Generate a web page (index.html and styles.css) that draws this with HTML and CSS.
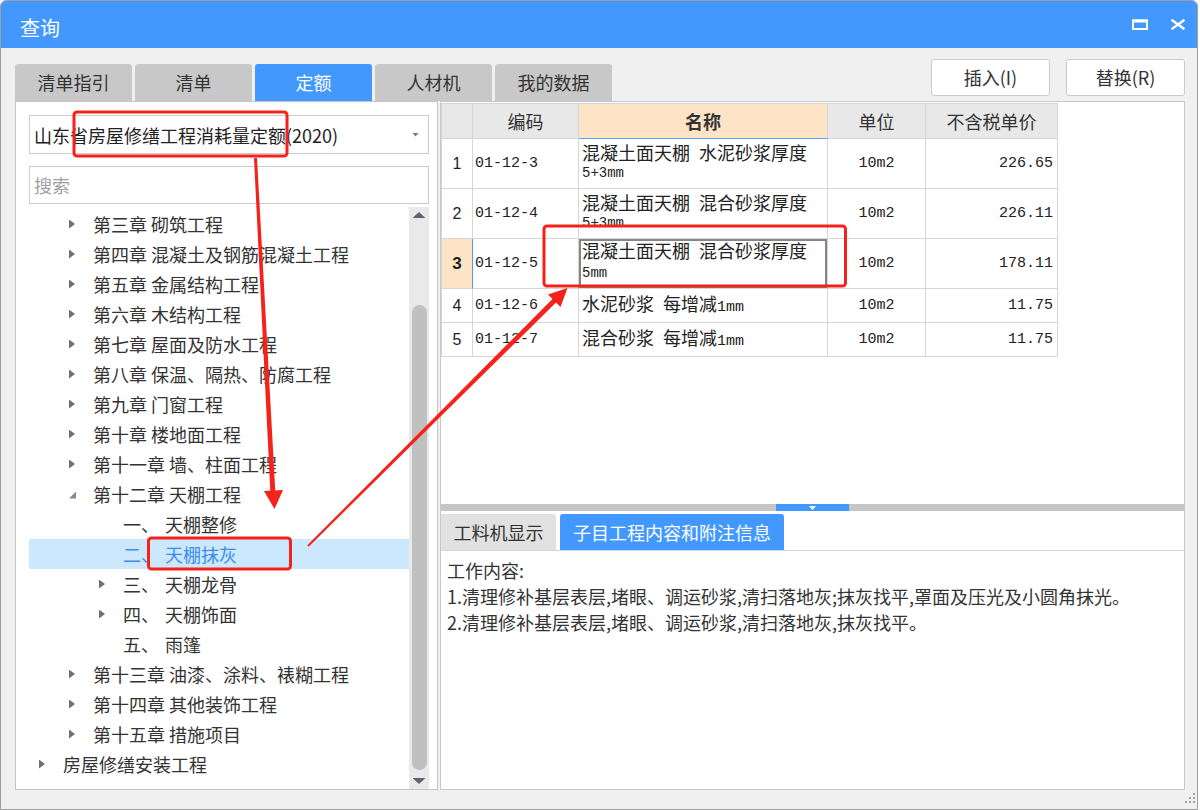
FILE: index.html
```html
<!DOCTYPE html>
<html lang="zh-CN">
<head>
<meta charset="utf-8">
<title>查询</title>
<link rel="stylesheet" href="styles.css">
</head>
<body>
<div class="window">
  <div class="titlebar">
    <span class="title">查询</span>
    <div class="win-ctrls">
      <svg class="ic" width="16" height="11" viewBox="0 0 16 11"><rect x="1" y="1.5" width="14" height="8.5" fill="none" stroke="#fff" stroke-width="2"/><rect x="0" y="0.5" width="16" height="3" fill="#fff"/></svg>
      <svg class="ic" width="16" height="11" viewBox="0 0 16 11"><path d="M1.5 0.8 L14.5 10.2 M14.5 0.8 L1.5 10.2" stroke="#fff" stroke-width="2.4" fill="none"/></svg>
    </div>
  </div>

  <div class="toolbar">
    <div class="tabs">
      <div class="tab">清单指引</div>
      <div class="tab">清单</div>
      <div class="tab active">定额</div>
      <div class="tab">人材机</div>
      <div class="tab">我的数据</div>
    </div>
    <div class="actions">
      <button class="btn">插入(I)</button>
      <button class="btn">替换(R)</button>
    </div>
  </div>

  <div class="main">
    <div class="left">
      <div class="select"><span class="select-text">山东省房屋修缮工程消耗量定额(2020)</span><i class="caret"></i></div>
      <div class="search">搜索</div>
      <div class="tree-wrap">
        <ul class="tree">
          <li class="row l1"><span class="tw"><b class="tri-r"></b></span>第三章 砌筑工程</li>
          <li class="row l1"><span class="tw"><b class="tri-r"></b></span>第四章 混凝土及钢筋混凝土工程</li>
          <li class="row l1"><span class="tw"><b class="tri-r"></b></span>第五章 金属结构工程</li>
          <li class="row l1"><span class="tw"><b class="tri-r"></b></span>第六章 木结构工程</li>
          <li class="row l1"><span class="tw"><b class="tri-r"></b></span>第七章 屋面及防水工程</li>
          <li class="row l1"><span class="tw"><b class="tri-r"></b></span>第八章 保温、隔热、防腐工程</li>
          <li class="row l1"><span class="tw"><b class="tri-r"></b></span>第九章 门窗工程</li>
          <li class="row l1"><span class="tw"><b class="tri-r"></b></span>第十章 楼地面工程</li>
          <li class="row l1"><span class="tw"><b class="tri-r"></b></span>第十一章 墙、柱面工程</li>
          <li class="row l1"><span class="tw"><b class="tri-e"></b></span>第十二章 天棚工程</li>
          <li class="row l2"><span class="tw"></span><span class="no">一、</span>天棚整修</li>
          <li class="row l2 sel"><span class="tw"></span><span class="no">二、</span>天棚抹灰</li>
          <li class="row l2"><span class="tw"><b class="tri-r"></b></span><span class="no">三、</span>天棚龙骨</li>
          <li class="row l2"><span class="tw"><b class="tri-r"></b></span><span class="no">四、</span>天棚饰面</li>
          <li class="row l2"><span class="tw"></span><span class="no">五、</span>雨篷</li>
          <li class="row l1"><span class="tw"><b class="tri-r"></b></span>第十三章 油漆、涂料、裱糊工程</li>
          <li class="row l1"><span class="tw"><b class="tri-r"></b></span>第十四章 其他装饰工程</li>
          <li class="row l1"><span class="tw"><b class="tri-r"></b></span>第十五章 措施项目</li>
          <li class="row l0"><span class="tw"><b class="tri-r"></b></span>房屋修缮安装工程</li>
        </ul>
        <div class="vscroll">
          <b class="arr-up"></b>
          <div class="thumb"></div>
          <b class="arr-down"></b>
        </div>
      </div>
    </div>

    <div class="right">
      <div class="grid-area">
        <div class="grid">
          <div class="h"></div>
          <div class="h">编码</div>
          <div class="h name-h">名称</div>
          <div class="h">单位</div>
          <div class="h">不含税单价</div>

          <div class="c num">1</div>
          <div class="c code">01-12-3</div>
          <div class="c name"><div class="l1t">混凝土面天棚&ensp;水泥砂浆厚度</div><div class="l2t">5+3mm</div></div>
          <div class="c unit">10m2</div>
          <div class="c price">226.65</div>

          <div class="c num">2</div>
          <div class="c code">01-12-4</div>
          <div class="c name"><div class="l1t">混凝土面天棚&ensp;混合砂浆厚度</div><div class="l2t">5+3mm</div></div>
          <div class="c unit">10m2</div>
          <div class="c price">226.11</div>

          <div class="c num cur">3</div>
          <div class="c code">01-12-5</div>
          <div class="c name focus"><div class="l1t">混凝土面天棚&ensp;混合砂浆厚度</div><div class="l2t">5mm</div></div>
          <div class="c unit">10m2</div>
          <div class="c price">178.11</div>

          <div class="c num">4</div>
          <div class="c code">01-12-6</div>
          <div class="c name one"><span class="t">水泥砂浆&ensp;每增减<span class="mono">1mm</span></span></div>
          <div class="c unit">10m2</div>
          <div class="c price">11.75</div>

          <div class="c num">5</div>
          <div class="c code">01-12-7</div>
          <div class="c name one"><span class="t">混合砂浆&ensp;每增减<span class="mono">1mm</span></span></div>
          <div class="c unit">10m2</div>
          <div class="c price">11.75</div>
        </div>
      </div>
      <div class="splitter"><div class="grip"><b></b></div></div>
      <div class="subtabs">
        <div class="stab">工料机显示</div>
        <div class="stab active">子目工程内容和附注信息</div>
      </div>
      <div class="content">
        <p>工作内容:</p>
        <p>1.清理修补基层表层,堵眼、调运砂浆,清扫落地灰;抹灰找平,罩面及压光及小圆角抹光。</p>
        <p>2.清理修补基层表层,堵眼、调运砂浆,清扫落地灰,抹灰找平。</p>
      </div>
    </div>
  </div>

  <div class="statusbar">
    <svg class="grip-dots" width="12" height="12" viewBox="0 0 12 12">
      <rect x="9" y="1" width="2" height="2" fill="#a0a0a0"/>
      <rect x="5" y="5" width="2" height="2" fill="#a0a0a0"/>
      <rect x="9" y="5" width="2" height="2" fill="#a0a0a0"/>
      <rect x="1" y="9" width="2" height="2" fill="#a0a0a0"/>
      <rect x="5" y="9" width="2" height="2" fill="#a0a0a0"/>
      <rect x="9" y="9" width="2" height="2" fill="#a0a0a0"/>
    </svg>
  </div>
</div>

<svg class="annot" width="1200" height="810" viewBox="0 0 1200 810">
  <g fill="none" stroke="#f5221b" stroke-width="3">
    <rect x="74" y="112" width="213" height="44" rx="3"/>
    <rect x="148.5" y="538" width="142" height="31" rx="3"/>
    <rect x="544" y="226" width="301.5" height="60" rx="3"/>
  </g>
  <g fill="#f5221b">
    <polygon points="254,158 257,158 275.5,495 270.5,495"/>
    <polygon points="264,491 283,490 274.5,509"/>
    <polygon points="307.3,545.3 308.7,546.7 558.8,299.8 555.2,296.2"/>
    <polygon points="548,294.5 560.5,307 567.5,288"/>
  </g>
</svg>
</body>
</html>
```

FILE: styles.css
```css
* { box-sizing: border-box; }

body {
  margin: 0;
  background: #ffffff;
  font-family: "Noto Sans CJK SC", "Microsoft YaHei", sans-serif;
  color: #333;
}

.window {
  width: 1198px;
  height: 810px;
  border: 1px solid #9e9e9e;
  border-radius: 6px 6px 0 0;
  background: #f0f0f0;
  overflow: hidden;
  display: flex;
  flex-direction: column;
}

/* title bar */
.titlebar {
  height: 47px;
  flex: none;
  background: #4298fd;
  display: flex;
  align-items: center;
  padding: 0 11px 0 19px;
}
.title {
  color: #fff;
  font-size: 20px;
  line-height: 24px;
  margin-top: 6px;
}
.win-ctrls {
  margin-left: auto;
  display: flex;
  gap: 22px;
  align-items: center;
}
.ic { display: block; }

/* toolbar with tabs and buttons */
.toolbar {
  height: 53px;
  flex: none;
  display: flex;
  align-items: flex-start;
  padding: 0 12px 0 14px;
}
.tabs {
  display: flex;
  gap: 3px;
  margin-top: 16px;
}
.tab {
  width: 117px;
  height: 37px;
  background: #c8c8c8;
  border-radius: 3px 3px 0 0;
  font-size: 18px;
  line-height: 37px;
  text-align: center;
  color: #333;
}
.tab.active {
  background: #4298fd;
  color: #fff;
}
.actions {
  margin-left: auto;
  margin-top: 11px;
  display: flex;
  gap: 16px;
}
.btn {
  width: 119px;
  height: 37px;
  background: #fff;
  border: 1px solid #cacaca;
  border-radius: 3px;
  font-family: "Noto Sans CJK SC", sans-serif;
  font-size: 18px;
  line-height: 33px;
  color: #333;
  padding: 0;
}

/* main */
.main {
  height: 689px;
  flex: none;
  display: flex;
  padding: 0 12px 0 14px;
  gap: 2px;
}

.left {
  width: 423px;
  height: 689px;
  background: #fff;
  border: 1px solid #c4c4c4;
  padding: 13px 8px 0 13px;
}
.select {
  height: 39px;
  border: 1px solid #cbcbcb;
  display: flex;
  align-items: center;
  padding: 0 9px 0 4px;
  font-size: 18px;
  line-height: 24px;
  color: #222;
}
.caret {
  margin-left: auto;
  width: 7px;
  height: 4px;
  background: #7a7a7a;
  clip-path: polygon(0 0, 100% 0, 50% 100%);
}
.search {
  margin-top: 12px;
  height: 38px;
  border: 1px solid #cbcbcb;
  padding-left: 4px;
  font-size: 18px;
  line-height: 36px;
  color: #a0a0a0;
}

.tree-wrap {
  margin-top: 3px;
  height: 582px;
  display: flex;
}
.tree {
  flex: 1;
  list-style: none;
  margin: 0;
  padding: 2px 0 0 0;
}
.row {
  height: 30px;
  display: flex;
  align-items: center;
  font-size: 18px;
  line-height: 30px;
  color: #333;
  white-space: nowrap;
}
.row.l0 { padding-left: 10px; }
.row.l1 { padding-left: 40px; }
.row.l2 { padding-left: 70px; }
.row.sel {
  background: #cce8ff;
  color: #3b8de9;
}
.tw {
  width: 24px;
  height: 30px;
  flex: none;
  display: flex;
  align-items: center;
}
.tri-r {
  display: block;
  width: 6px;
  height: 9px;
  background: #707070;
  clip-path: polygon(0 0, 100% 50%, 0 100%);
}
.tri-e {
  display: block;
  width: 7px;
  height: 7px;
  margin-top: 2px;
  background: #8a8a8a;
  clip-path: polygon(100% 0, 100% 100%, 0 100%);
}
.no {
  display: inline-block;
  width: 42px;
}

.vscroll {
  width: 20px;
  flex: none;
  background: #e9e9e9;
  display: flex;
  flex-direction: column;
  align-items: center;
  padding-top: 5px;
}
.arr-up {
  display: block;
  width: 13px;
  height: 6px;
  background: #626272;
  clip-path: polygon(50% 0, 100% 100%, 0 100%);
}
.thumb {
  margin-top: 87px;
  width: 15px;
  height: 465px;
  border-radius: 8px;
  background: #c0c0c0;
}
.arr-down {
  display: block;
  margin-top: 8px;
  width: 13px;
  height: 6px;
  background: #626272;
  clip-path: polygon(0 0, 100% 0, 50% 100%);
}

/* right side */
.right {
  width: 745px;
  height: 689px;
  border: 1px solid #c8c8c8;
  display: flex;
  flex-direction: column;
  background: #fff;
}
.grid-area {
  height: 402px;
  flex: none;
  padding-top: 1px;
  background: #fff;
}
.grid {
  display: grid;
  grid-template-columns: 31px 106px 249px 98px 132px;
  grid-template-rows: 35px 50px 50px 50px 34px 34px;
  width: 617px;
  border-left: 1px solid #d6d6d6;
  border-top: 1px solid #d6d6d6;
}
.h, .c {
  border-right: 1px solid #d6d6d6;
  border-bottom: 1px solid #d6d6d6;
}
.h {
  background: #e8e8e8;
  font-size: 18px;
  line-height: 34px;
  text-align: center;
  color: #333;
}
.h.name-h {
  background: #fde4c6;
  font-weight: bold;
  border-bottom-color: #5aa2f2;
}
.c {
  display: flex;
  align-items: center;
  color: #222;
}
.c.num {
  justify-content: center;
  font-family: "Liberation Sans", sans-serif;
  font-size: 16px;
}
.c.num.cur {
  background: #fde4c6;
  font-weight: bold;
  font-size: 17px;
  border-right-color: #4a9cf6;
}
.c.code {
  font-family: "Liberation Mono", monospace;
  font-size: 15px;
  padding-left: 2px;
}
.c.name {
  display: block;
  padding: 2px 0 0 3px;
  white-space: nowrap;
}
.c.name.one {
  display: flex;
  padding: 0 0 0 3px;
  font-size: 18px;
}
.c.name.focus {
  padding-top: 0;
  box-shadow: inset 0 0 0 2px #858585;
}
.l1t {
  font-size: 18px;
  line-height: 22px;
}
.l2t {
  margin-top: 3px;
  font-family: "Liberation Mono", monospace;
  font-size: 14px;
  line-height: 14px;
}
.focus .l2t { margin-top: 5px; }
.t { line-height: 24px; }
.mono {
  font-family: "Liberation Mono", monospace;
  font-size: 15px;
}
.c.unit {
  justify-content: center;
  font-family: "Liberation Mono", monospace;
  font-size: 15px;
}
.c.price {
  justify-content: flex-end;
  padding-right: 4px;
  font-family: "Liberation Mono", monospace;
  font-size: 15px;
}

.splitter {
  height: 7px;
  flex: none;
  background: #c6c6c6;
  display: flex;
  justify-content: center;
}
.grip {
  width: 73px;
  height: 7px;
  background: #4298fd;
  display: flex;
  justify-content: center;
  padding-top: 2px;
}
.grip b {
  display: block;
  width: 7px;
  height: 4px;
  background: #fff;
  clip-path: polygon(0 0, 100% 0, 50% 100%);
}

.subtabs {
  height: 40px;
  flex: none;
  display: flex;
  align-items: flex-end;
  gap: 4px;
  border-bottom: 1px solid #d6d6d6;
  background: #fff;
}
.stab {
  height: 36px;
  padding: 0 13px;
  font-size: 18px;
  line-height: 36px;
  background: #e1e1e1;
  color: #333;
  border-radius: 3px 3px 0 0;
}
.stab:first-child {
  width: 115px;
  padding: 0;
  text-align: center;
  border-radius: 0 3px 0 0;
}
.stab.active {
  background: #4298fd;
  color: #fff;
}

.content {
  flex: 1;
  padding: 6px 6px;
  background: #fff;
  font-size: 18px;
  line-height: 26px;
  color: #333;
}
.content p { margin: 0; }

.statusbar {
  height: 19px;
  flex: none;
  position: relative;
}
.grip-dots {
  position: absolute;
  right: 1px;
  bottom: 5px;
}

.annot {
  position: absolute;
  left: 0;
  top: 0;
  pointer-events: none;
}
```
